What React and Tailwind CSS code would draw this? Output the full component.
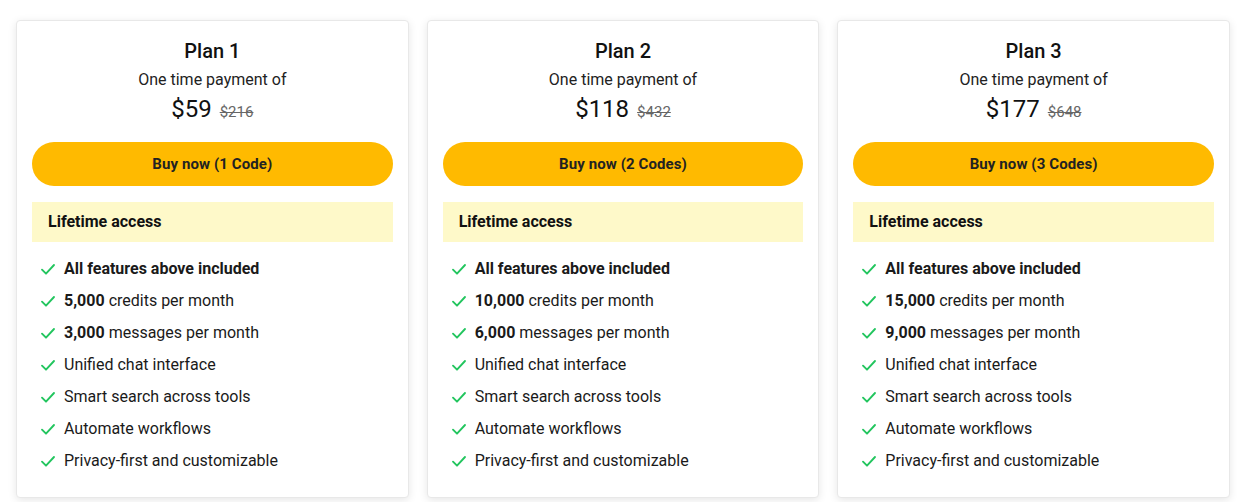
import React from "react";

const plans = [
  { name: "Plan 1", price: "$59", old: "$216", codes: "1 Code", credits: "5,000", messages: "3,000" },
  { name: "Plan 2", price: "$118", old: "$432", codes: "2 Codes", credits: "10,000", messages: "6,000" },
  { name: "Plan 3", price: "$177", old: "$648", codes: "3 Codes", credits: "15,000", messages: "9,000" },
];

function Check() {
  return (
    <svg width="16" height="16" viewBox="0 0 24 24" fill="none" stroke="#22c55e" strokeWidth="2.8" strokeLinecap="round" strokeLinejoin="round" className="shrink-0">
      <path d="M3 13l6 6L21 6" />
    </svg>
  );
}

function Item({ children }) {
  return (
    <li className="flex items-center gap-[8px] h-[32px]">
      <Check />
      <span>{children}</span>
    </li>
  );
}

function Card({ p }) {
  return (
    <div className="bg-white border border-[#e8e8e8] rounded-[4px] shadow-[0_2px_8px_rgba(0,0,0,0.10)] px-[15px] pt-[16px] pb-[20px] text-[#111]">
      <div className="text-center text-[20px] font-medium leading-[28px]">{p.name}</div>
      <div className="text-center text-[16px] leading-[22px] mt-[4px] text-[#222]">One time payment of</div>
      <div className="flex items-baseline justify-center gap-[8px] mt-[1px]">
        <span className="text-[24px] font-normal leading-[34px]">{p.price}</span>
        <span className="text-[15px] text-[#666] line-through">{p.old}</span>
      </div>
      <button className="mt-[16px] w-full h-[44px] rounded-full bg-[#ffba00] text-[15px] font-bold text-[#222] tracking-[0.1px]">
        Buy now ({p.codes})
      </button>
      <div className="mt-[16px] h-[40px] bg-[#fef9c9] flex items-center px-4 text-[16px] font-bold">
        Lifetime access
      </div>
      <ul className="mt-[11px] px-[8px] text-[16px] leading-[20px] text-[#1a1a1a]">
        <Item><b>All features above included</b></Item>
        <Item><b>{p.credits}</b> credits per month</Item>
        <Item><b>{p.messages}</b> messages per month</Item>
        <Item>Unified chat interface</Item>
        <Item>Smart search across tools</Item>
        <Item>Automate workflows</Item>
        <Item>Privacy-first and customizable</Item>
      </ul>
    </div>
  );
}

export default function App() {
  return (
    <div className="bg-white min-h-[502px] pt-[20px] pl-4 font-['Roboto',sans-serif]">
      <div className="grid grid-cols-3 gap-[18px] w-[1214px]">
        {plans.map((p) => (
          <Card key={p.name} p={p} />
        ))}
      </div>
    </div>
  );
}
